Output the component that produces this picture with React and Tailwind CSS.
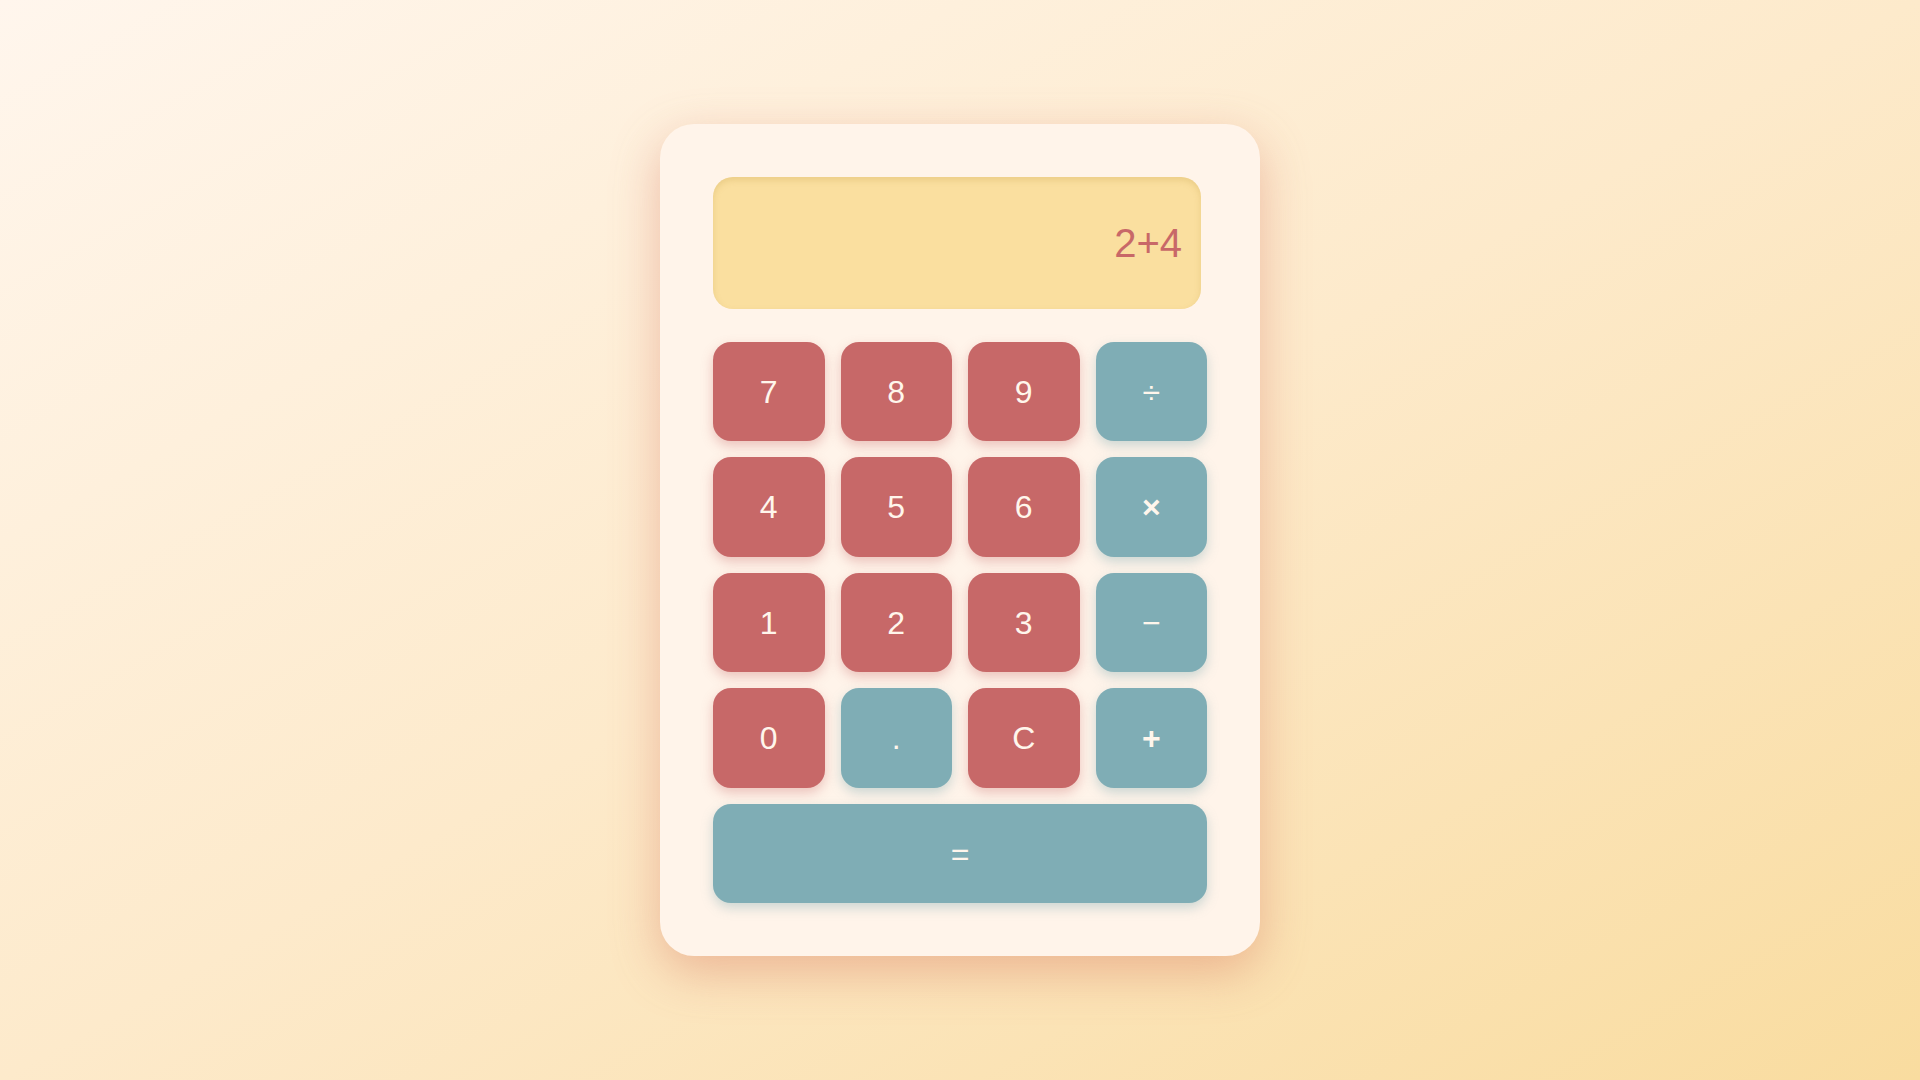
import { useState } from "react";

const keys = [
  { label: "7", kind: "num" },
  { label: "8", kind: "num" },
  { label: "9", kind: "num" },
  { label: "÷", kind: "op" },
  { label: "4", kind: "num" },
  { label: "5", kind: "num" },
  { label: "6", kind: "num" },
  { label: "×", kind: "op", bold: true },
  { label: "1", kind: "num" },
  { label: "2", kind: "num" },
  { label: "3", kind: "num" },
  { label: "−", kind: "op" },
  { label: "0", kind: "num" },
  { label: ".", kind: "op" },
  { label: "C", kind: "num" },
  { label: "+", kind: "op", bold: true },
];

const App = () => {
  const [expr, setExpr] = useState("2+4");

  const press = (k) => {
    if (k === "C") return setExpr("");
    setExpr((prev) => prev + k);
  };

  const evaluate = () => {
    try {
      const js = expr.replace(/÷/g, "/").replace(/×/g, "*").replace(/−/g, "-");
      // eslint-disable-next-line no-new-func
      const result = Function(`"use strict"; return (${js})`)();
      setExpr(String(result));
    } catch (e) {
      setExpr("Error");
    }
  };

  return (
    <div className="min-h-screen w-full flex items-center justify-center bg-linear-to-br from-[#fff6ed] via-[#fdeacb] to-[#f9dc9f] font-['Liberation_Sans',Arial,sans-serif]">
      <div className="w-[600px] bg-[#fff4ea] rounded-[34px] p-[53px] shadow-[0_16px_48px_rgba(215,115,90,0.42)]">
        {/* Display */}
        <div className="w-[488px] h-[132px] rounded-[20px] bg-[#fadf9f] shadow-[inset_0_3px_6px_rgba(190,150,60,0.25)] flex items-center justify-end pr-[19px]">
          <span className="text-[40px] leading-none text-[#c86868]">{expr}</span>
        </div>

        {/* Keys */}
        <div className="grid grid-cols-4 gap-4 mt-[33px]">
          {keys.map((k) => (
            <button
              key={k.label}
              onClick={() => press(k.label)}
              className={`h-[99.5px] rounded-[18px] text-[32px] text-[#fff6ec] flex items-center justify-center ${
                k.bold ? "font-bold" : ""
              } ${
                k.kind === "num"
                  ? "bg-[#c76868] shadow-[0_5px_12px_rgba(199,104,104,0.35)]"
                  : "bg-[#7fadb5] shadow-[0_5px_12px_rgba(110,160,170,0.35)]"
              }`}
            >
              {k.label}
            </button>
          ))}
          <button
            onClick={evaluate}
            className="col-span-4 h-[99.5px] rounded-[18px] text-[32px] text-[#fff6ec] bg-[#7fadb5] shadow-[0_5px_12px_rgba(110,160,170,0.35)] flex items-center justify-center"
          >
            =
          </button>
        </div>
      </div>
    </div>
  );
};

export default App;
